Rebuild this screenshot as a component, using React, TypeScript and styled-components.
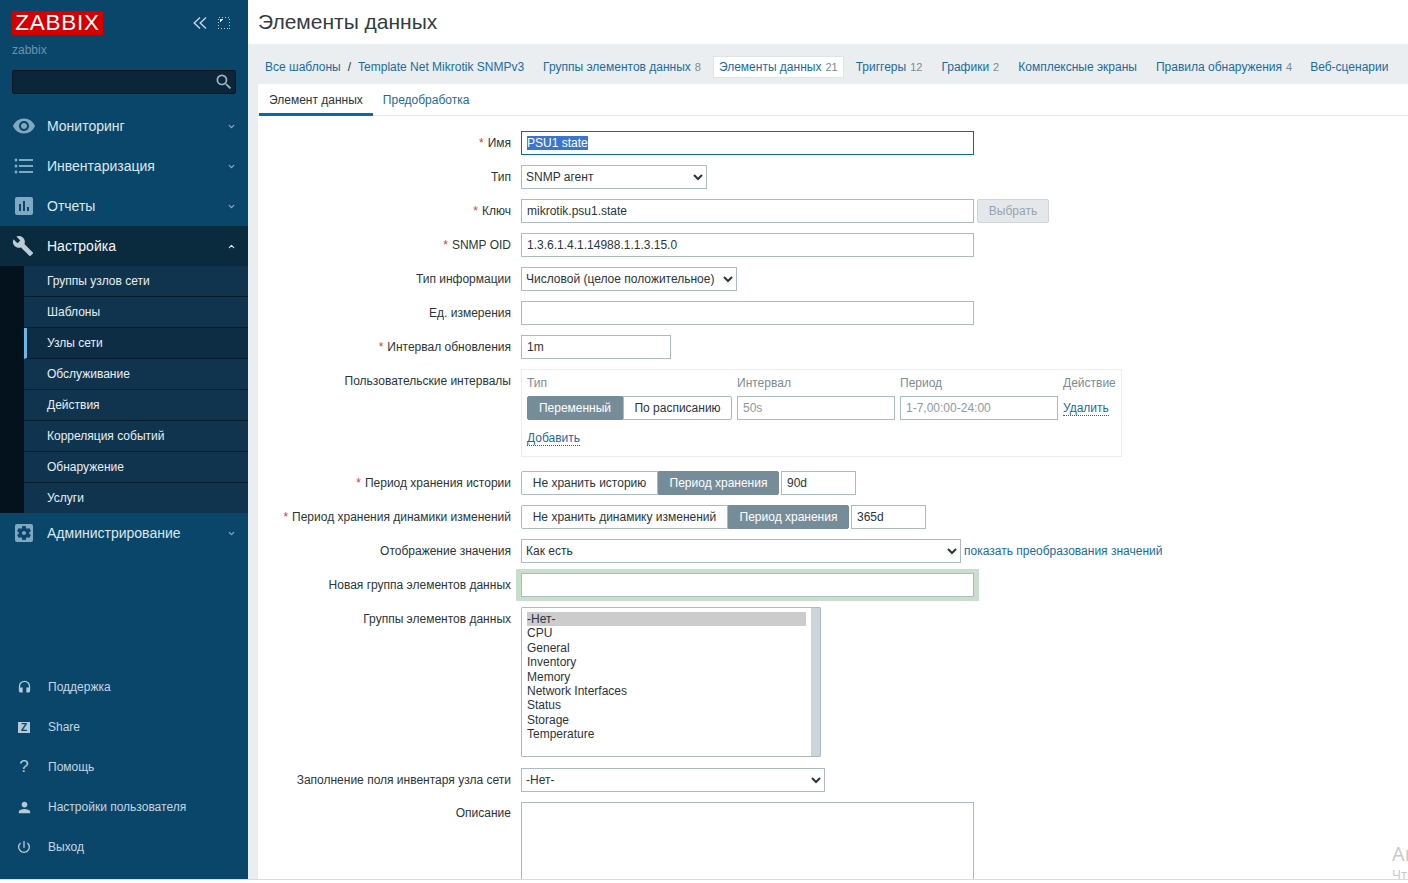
import React from 'react';
import styled, { createGlobalStyle } from 'styled-components';
import { ChevronDown, ChevronUp } from 'lucide-react';
import {
  MdVisibility,
  MdFormatListBulleted,
  MdAssessment,
  MdBuild,
  MdSettingsApplications,
  MdHeadset,
  MdPerson,
  MdPowerSettingsNew,
  MdSearch,
} from 'react-icons/md';

const Global = createGlobalStyle`
  html, body { margin: 0; padding: 0; height: 100%; overflow: hidden; background: #fff; }
  body { font-family: "Liberation Sans", Arial, sans-serif; font-size: 12px; color: #2b353b; }
  * { box-sizing: border-box; }
`;

const Page = styled.div`
  display: flex;
  height: 883px;
  overflow: hidden;
  position: relative;
`;

const Viewport = styled.div`
  display: flex;
  width: 100%;
  height: 880px;
  border-bottom: 1px solid #d8dcdf;
  overflow: hidden;
`;

const Sidebar = styled.aside`
  width: 248px;
  flex: none;
  background: #0a466a;
  display: flex;
  flex-direction: column;
`;

const LogoRow = styled.div`
  display: flex;
  align-items: center;
  padding: 11px 18px 0 12px;
  height: 35px;
`;

const Logo = styled.div`
  width: 91px;
  height: 24px;
  background: #d40000;
  color: #fff;
  font-size: 22.5px;
  line-height: 24px;
  letter-spacing: 0.75px;
  text-align: center;
`;

const SideTools = styled.div`
  margin-left: auto;
  display: flex;
  align-items: center;
  gap: 11px;
`;

const HostName = styled.div`
  color: #6b93ad;
  padding: 8px 12px 0;
  height: 35px;
  line-height: 14px;
`;

const SearchBox = styled.div`
  margin: 0 12px;
  height: 24px;
  background: #0b2638;
  border: 1px solid #05131d;
  border-radius: 2px;
  display: flex;
  justify-content: flex-end;
  align-items: center;
  color: #9db4c3;
  padding-right: 1px;
  flex: none;
`;

const Menu = styled.nav`
  margin-top: 12px;
  display: flex;
  flex-direction: column;
`;

const MenuItem = styled.div<{ $open?: boolean }>`
  height: 40px;
  display: flex;
  align-items: center;
  padding: 0 12px;
  font-size: 14px;
  color: ${(p) => (p.$open ? '#f4f7f9' : '#dce8ef')};
  background: ${(p) => (p.$open ? '#0a2a3e' : 'transparent')};
`;

const MenuIcon = styled.span`
  width: 35px;
  flex: none;
  display: flex;
  justify-content: flex-start;
  color: #7fa8c1;
  margin-top: -1px;
`;

const OpenIcon = styled(MenuIcon)`
  color: #b9ccd9;
`;

const Arrow = styled.span<{ $open?: boolean }>`
  margin-left: auto;
  display: flex;
  color: ${(p) => (p.$open ? '#dce8ef' : '#8fb2c8')};
`;

const SubMenu = styled.div`
  background: #03121c;
  padding-left: 24px;
  display: flex;
  flex-direction: column;
`;

const SubItem = styled.div<{ $active?: boolean }>`
  height: 31px;
  line-height: 30px;
  padding-left: ${(p) => (p.$active ? '20px' : '23px')};
  color: #e8eff4;
  background: ${(p) => (p.$active ? '#0c2d44' : '#10344d')};
  border-bottom: 1px solid #071c2b;
  border-left: ${(p) => (p.$active ? '3px solid #6fb5e8' : '0')};
  &:last-child {
    border-bottom: 0;
    height: 30px;
  }
`;

const Bottom = styled.div`
  margin-top: auto;
  padding-bottom: 12px;
  display: flex;
  flex-direction: column;
`;

const BottomItem = styled.div`
  height: 40px;
  display: flex;
  align-items: center;
  padding-left: 16px;
  color: #c4d6e2;
`;

const BottomIcon = styled.span`
  width: 32px;
  flex: none;
  display: flex;
  justify-content: flex-start;
  color: #b5cad8;
  font-size: 17px;
`;

const HeadsetIcon = styled(MdHeadset)`
  margin-left: 1px;
`;

const QMark = styled.span`
  width: 16px;
  text-align: center;
  line-height: 16px;
`;

const ZBox = styled.span`
  width: 12px;
  height: 11px;
  margin-left: 2px;
  background: #b5cad8;
  color: #0a466a;
  font-size: 10px;
  font-weight: 700;
  line-height: 11px;
  text-align: center;
`;

const Main = styled.main`
  flex: 1;
  min-width: 0;
  display: flex;
  flex-direction: column;
  background: #ebeef0;
`;

const Header = styled.header`
  height: 44px;
  flex: none;
  background: #fff;
  padding: 9px 10px 0;
  font-size: 21px;
  line-height: 26px;
  color: #333c42;
`;

const NavRow = styled.div`
  height: 40px;
  flex: none;
  display: flex;
  align-items: center;
  padding-left: 17px;
  white-space: nowrap;
  padding-top: 5px;
`;

const Crumb = styled.a`
  color: #1a6b9f;
  text-decoration: none;
`;

const Slash = styled.span`
  margin: 0 7px;
  color: #2b353b;
`;

const NavLink = styled.a<{ $gap?: number; $current?: boolean }>`
  color: #1a6b9f;
  text-decoration: none;
  margin-left: ${(p) => p.$gap ?? 19}px;
  ${(p) =>
    p.$current
      ? `background:#fff; border:1px solid #e1e5e8; height:22px; line-height:20px; padding:0 5px;`
      : ''}
`;

const Count = styled.sup`
  font-size: 11px;
  color: #7a8b95;
  vertical-align: baseline;
  margin-left: 4px;
  line-height: 0;
`;

const Panel = styled.section`
  flex: 1;
  min-height: 0;
  margin-left: 10px;
  background: #fff;
  overflow: hidden;
`;

const TabBar = styled.div`
  height: 32px;
  display: flex;
  border-bottom: 1px solid #e6e9eb;
  padding-left: 1px;
`;

const Tab = styled.div<{ $active?: boolean }>`
  height: 32px;
  padding: 0 10px;
  line-height: 32px;
  color: ${(p) => (p.$active ? '#2b353b' : '#1a6b9f')};
  border-bottom: ${(p) => (p.$active ? '3px solid #0a6aa5' : '0')};
`;

const Form = styled.div`
  display: grid;
  grid-template-columns: 253px 1fr;
  column-gap: 10px;
  row-gap: 10px;
  padding-top: 15px;
`;

const Label = styled.div<{ $shift?: number }>`
  text-align: right;
  line-height: 24px;
  white-space: nowrap;
  color: #2b353b;
  margin-top: ${(p) => p.$shift ?? 0}px;
`;

const Star = styled.span`
  color: #e33734;
  margin-right: 4px;
`;

const Field = styled.div`
  display: flex;
  align-items: flex-start;
  gap: 5px;
  min-height: 24px;
`;

const TextBox = styled.div<{ $w: number; $muted?: boolean; $focus?: boolean }>`
  width: ${(p) => p.$w}px;
  height: 24px;
  flex: none;
  border: 1px solid ${(p) => (p.$focus ? '#0a6aa5' : '#acbbc2')};
  background: #fff;
  padding: 0 5px;
  line-height: 22px;
  color: ${(p) => (p.$muted ? '#8c9aa3' : '#2b353b')};
`;

const AttachedBox = styled(TextBox)`
  margin-left: -3px;
`;

const Selected = styled.span`
  background: #3a76d0;
  color: #fff;
  display: inline-block;
  line-height: 14px;
`;

const Dropdown = styled.select<{ $w: number; $shift?: number }>`
  width: ${(p) => p.$w}px;
  height: 24px;
  flex: none;
  border: 1px solid #acbbc2;
  background: #fff;
  color: #2b353b;
  font: 12px "Liberation Sans", Arial, sans-serif;
  padding: 0;
  border-radius: 0;
  outline: none;
  margin-top: ${(p) => p.$shift ?? 0}px;
`;

const BrowseButton = styled.div`
  width: 72px;
  height: 24px;
  flex: none;
  margin-left: -2px;
  background: #e5e8ea;
  border: 1px solid #cfd5d9;
  border-radius: 2px;
  color: #98a4ab;
  text-align: center;
  line-height: 22px;
`;

const IntervalBox = styled.div`
  width: 601px;
  height: 88px;
  border: 1px solid #ebeef0;
  margin-bottom: 4px;
  padding: 6px 5px 0;
  display: flex;
  flex-direction: column;
`;

const IntervalHead = styled.div`
  display: grid;
  grid-template-columns: 210px 163px 163px auto;
  height: 14px;
  line-height: 14px;
  color: #7d8c95;
`;

const IntervalRow = styled.div`
  display: grid;
  grid-template-columns: 210px 163px 163px auto;
  margin-top: 6px;
  align-items: start;
`;

const Segments = styled.div`
  display: flex;
  height: 24px;
  flex: none;
`;

const Segment = styled.div<{ $on?: boolean; $w: number }>`
  width: ${(p) => p.$w}px;
  height: 24px;
  text-align: center;
  line-height: 22px;
  border: 1px solid ${(p) => (p.$on ? '#768d99' : '#acbbc2')};
  background: ${(p) => (p.$on ? '#768d99' : '#fff')};
  color: ${(p) => (p.$on ? '#fff' : '#2b353b')};
  &:first-child { border-radius: 2px 0 0 2px; }
  &:last-child { border-radius: 0 2px 2px 0; }
`;

const DashLink = styled.a`
  color: #1a6b9f;
  text-decoration: none;
  border-bottom: 1px dotted #0a6aa5;
  line-height: 13px;
  display: inline-block;
  justify-self: start;
`;

const RowLink = styled(DashLink)`
  margin-top: 6px;
`;

const AddLink = styled(DashLink)`
  margin-top: 12px;
  align-self: flex-start;
`;

const PlainLink = styled.a`
  color: #1a6b9f;
  line-height: 24px;
  margin-left: -2px;
`;

const NewGroup = styled.div`
  width: 463px;
  height: 32px;
  margin: -4px 0 -4px -5px;
  background: #c8e0cb;
  border-radius: 1px;
  padding: 4px 5px;
  flex: none;
`;

const ListBox = styled.div`
  width: 300px;
  height: 150px;
  border: 1px solid #acbbc2;
  border-radius: 1px;
  display: flex;
  background: #fff;
`;

const ListItems = styled.div`
  flex: 1;
  padding: 4px 5px 0;
`;

const ListItem = styled.div<{ $on?: boolean }>`
  height: 14.4px;
  line-height: 14px;
  background: ${(p) => (p.$on ? '#cccccc' : 'transparent')};
`;

const ScrollTrack = styled.div`
  width: 9px;
  background: #cbd5da;
`;

const TextArea = styled.div`
  width: 453px;
  height: 140px;
  border: 1px solid #acbbc2;
`;

const Watermark = styled.div`
  position: absolute;
  left: 1392px;
  top: 844px;
  color: #c7c9ca;
  white-space: nowrap;
  font-family: "Open Sans", "Noto Sans", sans-serif;
`;

const WatermarkTitle = styled.div`
  font-size: 20px;
  line-height: 20px;
`;

const WatermarkSub = styled.div`
  font-size: 13px;
  line-height: 20px;
`;

const mainMenu = [
  { t: 'Мониторинг', i: <MdVisibility size={24} /> },
  { t: 'Инвентаризация', i: <MdFormatListBulleted size={24} /> },
  { t: 'Отчеты', i: <MdAssessment size={24} /> },
];

const subMenu = [
  'Группы узлов сети',
  'Шаблоны',
  'Узлы сети',
  'Обслуживание',
  'Действия',
  'Корреляция событий',
  'Обнаружение',
  'Услуги',
];

const groups = ['-Нет-', 'CPU', 'General', 'Inventory', 'Memory', 'Network Interfaces', 'Status', 'Storage', 'Temperature'];

const Req = () => <Star>*</Star>;

export default function App() {
  return (
    <Page>
      <Global />
      <Viewport>
        <Sidebar>
          <LogoRow>
            <Logo>ZABBIX</Logo>
            <SideTools>
              <svg width="14" height="12" viewBox="0 0 14 12" fill="none" stroke="#c4d6e2" strokeWidth="1.4">
                <path d="M7 .5 1.2 6 7 11.5M13 .5 7.2 6 13 11.5" />
              </svg>
              <svg width="12" height="12" viewBox="0 0 12 12" fill="none" shapeRendering="crispEdges">
                <rect x=".5" y=".5" width="11" height="11" stroke="#b5cad8" strokeDasharray="1 2" />
                <path d="M2 2h3.5L2 5.5z" fill="#e4edf3" />
              </svg>
            </SideTools>
          </LogoRow>
          <HostName>zabbix</HostName>
          <SearchBox>
            <MdSearch size={20} />
          </SearchBox>
          <Menu>
            {mainMenu.map((m) => (
              <MenuItem key={m.t}>
                <MenuIcon>{m.i}</MenuIcon>
                {m.t}
                <Arrow>
                  <ChevronDown size={9} strokeWidth={3} />
                </Arrow>
              </MenuItem>
            ))}
            <MenuItem $open>
              <OpenIcon>
                <MdBuild size={22} />
              </OpenIcon>
              Настройка
              <Arrow $open>
                <ChevronUp size={9} strokeWidth={3} />
              </Arrow>
            </MenuItem>
            <SubMenu>
              {subMenu.map((s) => (
                <SubItem key={s} $active={s === 'Узлы сети'}>
                  {s}
                </SubItem>
              ))}
            </SubMenu>
            <MenuItem>
              <MenuIcon>
                <MdSettingsApplications size={24} />
              </MenuIcon>
              Администрирование
              <Arrow>
                <ChevronDown size={9} strokeWidth={3} />
              </Arrow>
            </MenuItem>
          </Menu>
          <Bottom>
            <BottomItem>
              <BottomIcon><HeadsetIcon size={15} /></BottomIcon>
              Поддержка
            </BottomItem>
            <BottomItem>
              <BottomIcon><ZBox>Z</ZBox></BottomIcon>
              Share
            </BottomItem>
            <BottomItem>
              <BottomIcon><QMark>?</QMark></BottomIcon>
              Помощь
            </BottomItem>
            <BottomItem>
              <BottomIcon><MdPerson size={17} /></BottomIcon>
              Настройки пользователя
            </BottomItem>
            <BottomItem>
              <BottomIcon><MdPowerSettingsNew size={16} /></BottomIcon>
              Выход
            </BottomItem>
          </Bottom>
        </Sidebar>
        <Main>
          <Header>Элементы данных</Header>
          <NavRow>
            <Crumb>Все шаблоны</Crumb>
            <Slash>/</Slash>
            <Crumb>Template Net Mikrotik SNMPv3</Crumb>
            <NavLink>Группы элементов данных<Count>8</Count></NavLink>
            <NavLink $current $gap={12}>Элементы данных<Count>21</Count></NavLink>
            <NavLink $gap={12}>Триггеры<Count>12</Count></NavLink>
            <NavLink>Графики<Count>2</Count></NavLink>
            <NavLink>Комплексные экраны</NavLink>
            <NavLink>Правила обнаружения<Count>4</Count></NavLink>
            <NavLink $gap={18}>Веб-сценарии</NavLink>
          </NavRow>
          <Panel>
            <TabBar>
              <Tab $active>Элемент данных</Tab>
              <Tab>Предобработка</Tab>
            </TabBar>
            <Form>
              <Label><Req />Имя</Label>
              <Field><TextBox $w={453} $focus><Selected>PSU1 state</Selected></TextBox></Field>

              <Label>Тип</Label>
              <Field>
                <Dropdown $w={186}><option>SNMP агент</option></Dropdown>
              </Field>

              <Label><Req />Ключ</Label>
              <Field>
                <TextBox $w={453}>mikrotik.psu1.state</TextBox>
                <BrowseButton>Выбрать</BrowseButton>
              </Field>

              <Label><Req />SNMP OID</Label>
              <Field><TextBox $w={453}>1.3.6.1.4.1.14988.1.1.3.15.0</TextBox></Field>

              <Label>Тип информации</Label>
              <Field>
                <Dropdown $w={216}><option>Числовой (целое положительное)</option></Dropdown>
              </Field>

              <Label>Ед. измерения</Label>
              <Field><TextBox $w={453} /></Field>

              <Label><Req />Интервал обновления</Label>
              <Field><TextBox $w={150}>1m</TextBox></Field>

              <Label>Пользовательские интервалы</Label>
              <Field>
                <IntervalBox>
                  <IntervalHead>
                    <span>Тип</span>
                    <span>Интервал</span>
                    <span>Период</span>
                    <span>Действие</span>
                  </IntervalHead>
                  <IntervalRow>
                    <Segments>
                      <Segment $on $w={96}>Переменный</Segment>
                      <Segment $w={109}>По расписанию</Segment>
                    </Segments>
                    <TextBox $w={158} $muted>50s</TextBox>
                    <TextBox $w={158} $muted>1-7,00:00-24:00</TextBox>
                    <RowLink>Удалить</RowLink>
                  </IntervalRow>
                  <AddLink>Добавить</AddLink>
                </IntervalBox>
              </Field>

              <Label><Req />Период хранения истории</Label>
              <Field>
                <Segments>
                  <Segment $w={137}>Не хранить историю</Segment>
                  <Segment $on $w={121}>Период хранения</Segment>
                </Segments>
                <AttachedBox $w={75}>90d</AttachedBox>
              </Field>

              <Label><Req />Период хранения динамики изменений</Label>
              <Field>
                <Segments>
                  <Segment $w={207}>Не хранить динамику изменений</Segment>
                  <Segment $on $w={121}>Период хранения</Segment>
                </Segments>
                <AttachedBox $w={75}>365d</AttachedBox>
              </Field>

              <Label>Отображение значения</Label>
              <Field>
                <Dropdown $w={440}><option>Как есть</option></Dropdown>
                <PlainLink>показать преобразования значений</PlainLink>
              </Field>

              <Label>Новая группа элементов данных</Label>
              <Field>
                <NewGroup><TextBox $w={453} /></NewGroup>
              </Field>

              <Label>Группы элементов данных</Label>
              <Field>
                <ListBox>
                  <ListItems>
                    {groups.map((g, i) => (
                      <ListItem key={g} $on={i === 0}>{g}</ListItem>
                    ))}
                  </ListItems>
                  <ScrollTrack />
                </ListBox>
              </Field>

              <Label $shift={1}>Заполнение поля инвентаря узла сети</Label>
              <Field>
                <Dropdown $w={304} $shift={1}><option>-Нет-</option></Dropdown>
              </Field>

              <Label $shift={-1}>Описание</Label>
              <Field><TextArea /></Field>
            </Form>
          </Panel>
        </Main>
      </Viewport>
      <Watermark>
        <WatermarkTitle>Активация Windows</WatermarkTitle>
        <WatermarkSub>Чтобы активировать Windows</WatermarkSub>
      </Watermark>
    </Page>
  );
}
